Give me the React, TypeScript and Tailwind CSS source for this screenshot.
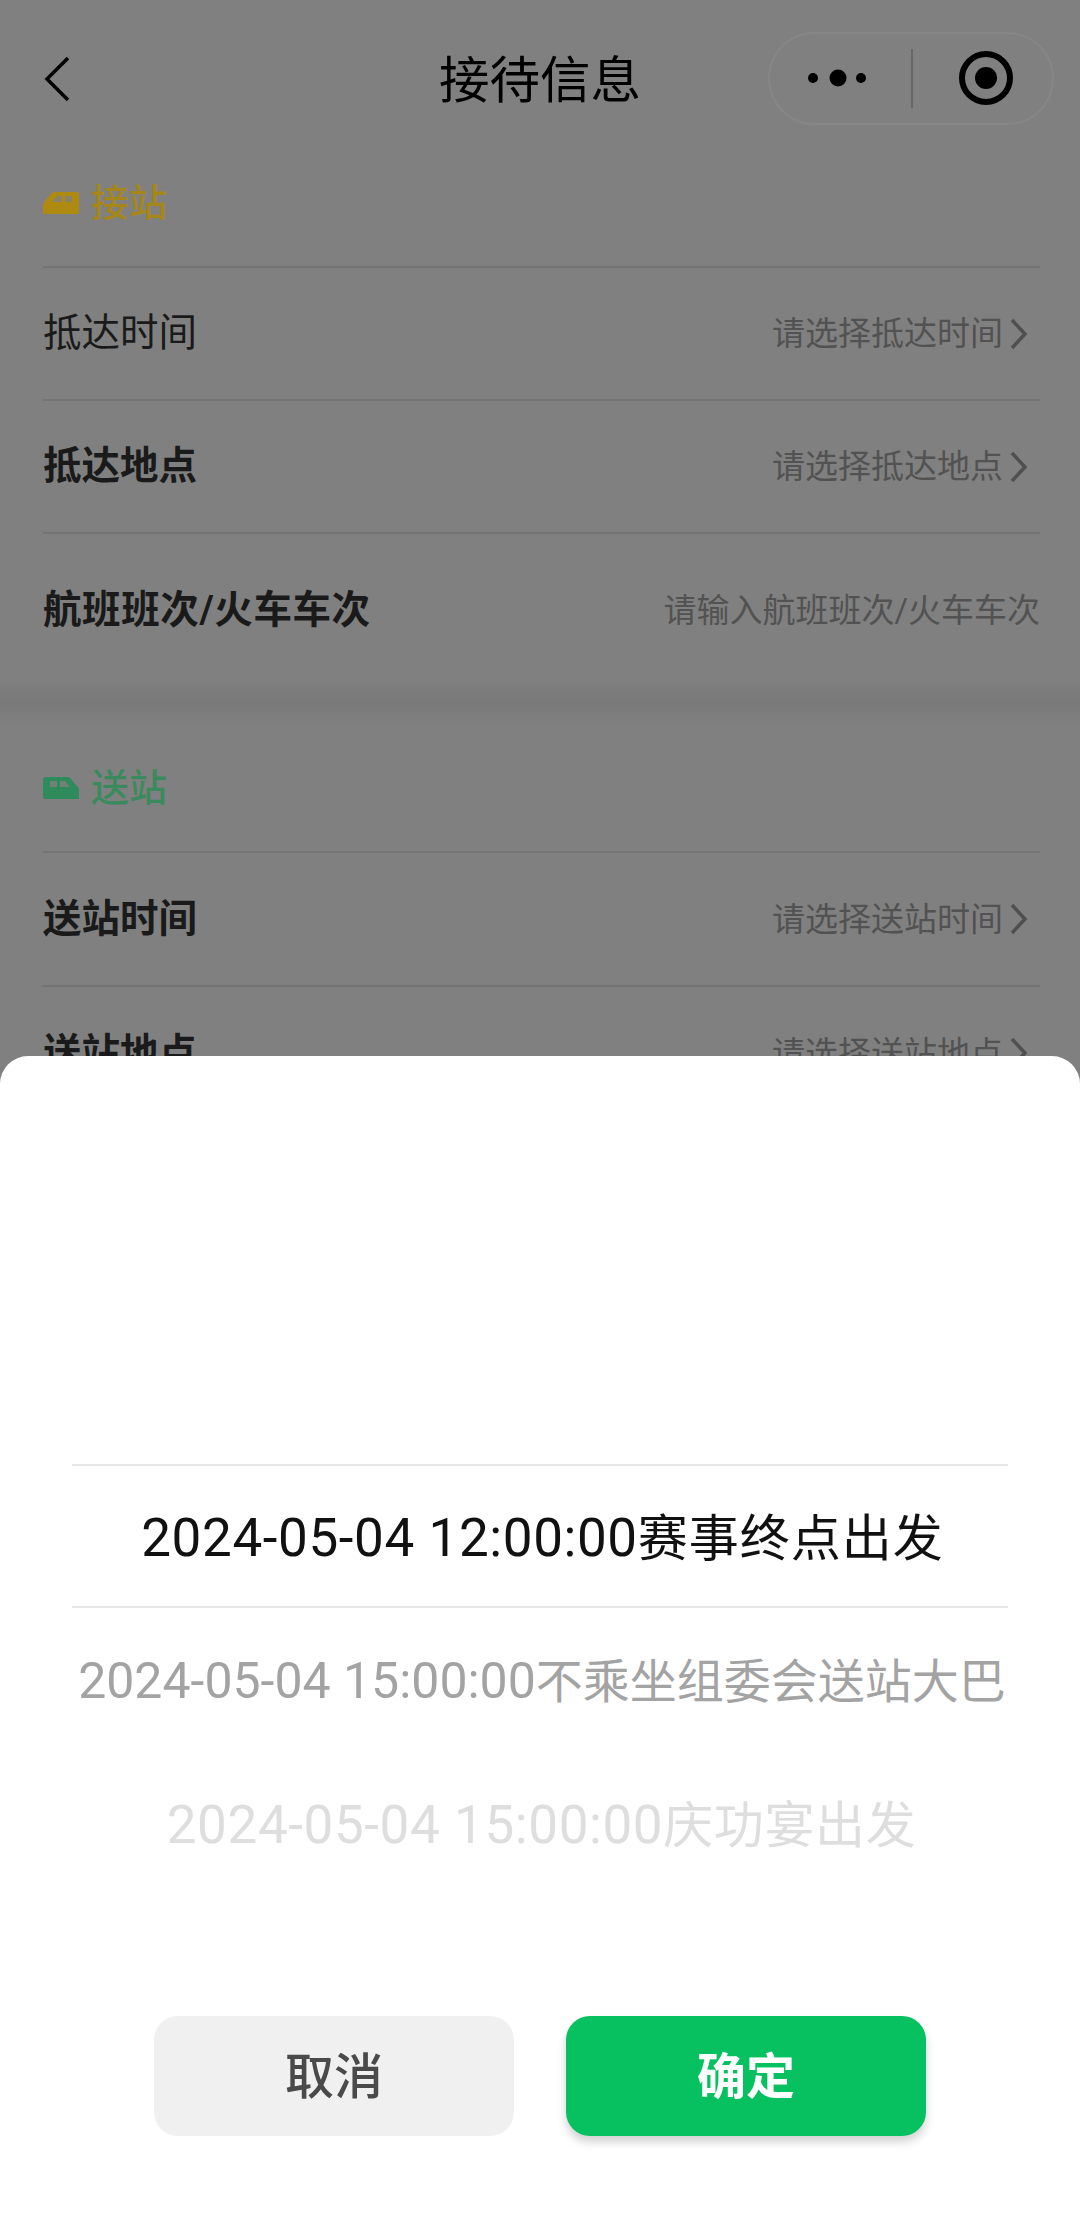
const cjk = "font-['Roboto','Noto_Sans_CJK_SC',sans-serif]"

function Chevron() {
  return (
    <svg width="20" height="32" viewBox="0 0 20 32" fill="none" className="ml-[6px] mr-[11px]">
      <path d="M3 2 L16 16 L3 30" stroke="#4f4f4f" strokeWidth="3.5" />
    </svg>
  )
}

function TrainIcon({ color, flip }: { color: string; flip?: boolean }) {
  return (
    <svg width="36" height="24" viewBox="0 0 36 24" className={flip ? "-scale-x-100" : ""}>
      <path d="M0 23 V14 Q0 12 2 10 L9 2 Q10 1 12 1 H33 Q36 1 36 4 V21 Q36 23 34 23 Z" fill={color} />
      <path d="M9 11 L14 5 H19 V11 Z M22 5 H29 V11 H22 Z" fill="#808080" opacity="0.8" />
    </svg>
  )
}

function SectionHead({ icon, label, color, className }: { icon: React.ReactNode; label: string; color: string; className: string }) {
  return (
    <div className={`flex items-center gap-[12px] border-b-2 border-[#747474] ${className}`}>
      {icon}
      <span className={`text-[38px] font-medium leading-none ${color}`}>{label}</span>
    </div>
  )
}

function Row({ label, hint, bold = true, last = false, h = "h-[133px]", arrow = true, wide = false }: { label: string; hint: string; bold?: boolean; last?: boolean; h?: string; arrow?: boolean; wide?: boolean }) {
  return (
    <div className={`flex items-center justify-between ${h} ${last ? "" : "border-b-2 border-[#747474]"}`}>
      <span className={`text-[38.5px] leading-none text-[#1a1a1a] ${bold ? "font-bold" : ""} ${wide ? "tracking-[0.6px]" : ""}`}>{label}</span>
      <span className="flex items-center text-[33px] leading-none text-[#525252]">
        {hint}
        {arrow && <Chevron />}
      </span>
    </div>
  )
}

export default function App() {
  return (
    <div className={`relative h-[2232px] w-[1080px] overflow-hidden bg-[#808080] ${cjk}`}>
      {/* top bar */}
      <div className="relative h-[156px]">
        <svg width="30" height="46" viewBox="0 0 30 46" fill="none" className="absolute left-[43px] top-[56px]">
          <path d="M25 2 L4 23 L25 44" stroke="#000" strokeWidth="3.5" />
        </svg>
        <h1 className="absolute left-[439px] top-[56px] text-[50.5px] leading-[50px] text-black">接待信息</h1>
        <div className="absolute left-[768px] top-[32px] flex h-[93px] w-[286px] items-center rounded-[47px] border-2 border-[#868686]">
          <svg width="141" height="89" viewBox="0 0 141 89" className="shrink-0">
            <circle cx="43" cy="44" r="5" fill="#000" />
            <circle cx="68" cy="44" r="8.5" fill="#000" />
            <circle cx="91" cy="44" r="5" fill="#000" />
          </svg>
          <div className="h-[59px] w-[2px] bg-[#666]" />
          <svg width="139" height="89" viewBox="0 0 139 89" className="shrink-0">
            <circle cx="73" cy="44" r="24" fill="none" stroke="#000" strokeWidth="6" />
            <circle cx="73" cy="44" r="11" fill="#000" />
          </svg>
        </div>
      </div>

      {/* pick up */}
      <div className="h-[527px] pl-[43px] pr-[40px]">
        <SectionHead
          icon={<TrainIcon color="#ae8a10" />}
          label="接站"
          color="text-[#a5861a]"
          className="h-[112px] pb-[16px]"
        />
        <Row label="抵达时间" hint="请选择抵达时间" bold={false} />
        <Row label="抵达地点" hint="请选择抵达地点" />
        <Row label="航班班次/火车车次" hint="请输入航班班次/火车车次" last arrow={false} h="h-[149px] pt-[3px]" wide />
      </div>

      <div className="h-[40px] bg-gradient-to-b from-[#7e7e7e] via-[#797979] to-[#7f7f7f]" />

      {/* drop off */}
      <div className="pl-[43px] pr-[40px]">
        <SectionHead
          icon={<TrainIcon color="#2f8a5c" flip />}
          label="送站"
          color="text-[#3b8a5e]"
          className="h-[130px] pt-[2px]"
        />
        <Row label="送站时间" hint="请选择送站时间" h="h-[134px]" />
        <Row label="送站地点" hint="请选择送站地点" h="h-[134px]" />
      </div>

      {/* picker sheet */}
      <div className="absolute inset-x-0 bottom-0 h-[1176px] rounded-t-[28px] bg-white">
        <div className="mx-[72px] mt-[408px] h-[144px] whitespace-nowrap border-y-2 border-[#e8e8e8] pl-[5px] text-center text-[50px] leading-[144px] text-[#111]">
          <span className="text-[53px] tracking-[0.6px]">2024-05-04 12:00:00</span>
          <span className="tracking-[1px]">赛事终点出发</span>
        </div>
        <div className="h-[144px] whitespace-nowrap pl-[4px] text-center text-[47px] leading-[146px] text-[#a3a3a3]">
          <span className="text-[50px]">2024-05-04 15:00:00</span>
          <span>不乘坐组委会送站大巴</span>
        </div>
        <div className="h-[144px] whitespace-nowrap pl-[3px] text-center text-[50px] leading-[146px] text-[#dedede]">
          <span className="text-[53px] tracking-[0.6px]">2024-05-04 15:00:00</span>
          <span className="tracking-[0.6px]">庆功宴出发</span>
        </div>

        <div className="mt-[120px] flex justify-center gap-[52px]">
          <button className="h-[120px] w-[360px] rounded-[24px] bg-[#f0f0f0] pt-[3px] text-[49px] font-medium text-[#4a4a4a]">
            取消
          </button>
          <button className="h-[120px] w-[360px] rounded-[24px] bg-[#07c160] pt-[3px] text-[49px] font-bold text-white shadow-[0_6px_10px_rgba(0,0,0,0.18)]">
            确定
          </button>
        </div>
      </div>
    </div>
  )
}
